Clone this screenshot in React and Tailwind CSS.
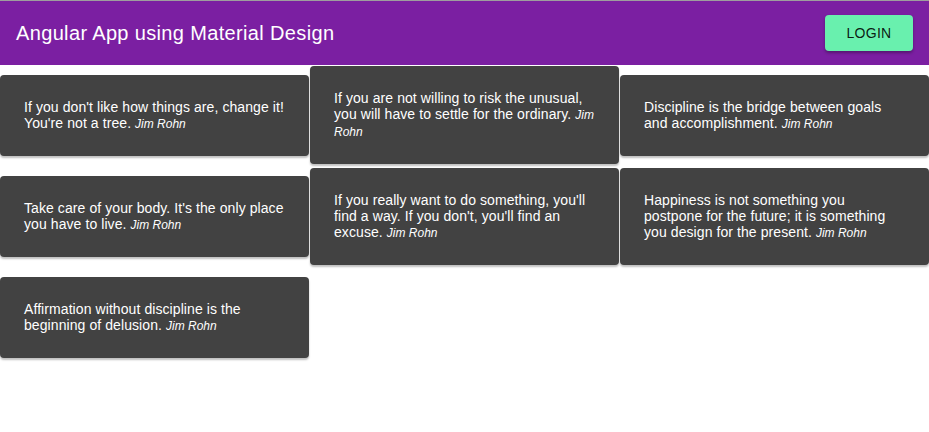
const quotes = [
  ["If you don't like how things are, change it! You're not a tree."],
  ["If you are not willing to risk the unusual, you will have to settle for the ordinary."],
  ["Discipline is the bridge between goals and accomplishment."],
  ["Take care of your body. It's the only place you have to live."],
  ["If you really want to do something, you'll find a way. If you don't, you'll find an excuse."],
  ["Happiness is not something you", "postpone for the future; it is something you design for the present."],
  ["Affirmation without discipline is the beginning of delusion."],
];

export default function App() {
  return (
    <div className="min-h-[432px] bg-white font-['Liberation_Sans',Arial,sans-serif]">
      <header className="flex h-[65px] items-center justify-between border-t border-[#9e9e9e] bg-[#7b1fa2] pl-4 pr-4">
        <h1 className="text-[20px] tracking-[0.35px] text-white">Angular App using Material Design</h1>
        <button className="h-9 w-[88px] rounded bg-[#69f0ae] text-[14px] font-medium tracking-[0.3px] text-black/90 shadow-[0_2px_3px_rgba(0,0,0,0.3)]">
          LOGIN
        </button>
      </header>
      <section className="grid grid-cols-3 gap-x-px gap-y-[5px] pt-[2px]">
        {quotes.map((q, i) => (
          <div key={i} className="flex h-24 items-center">
            <div className="w-full rounded bg-[#424242] p-6 text-[14px] leading-4 tracking-[0.08px] text-white shadow-[0_2px_2px_rgba(0,0,0,0.25)]">
              {q[0]}
              {q[1] && <br />}
              {q[1]} <em className="text-[12px] tracking-normal">Jim Rohn</em>
            </div>
          </div>
        ))}
      </section>
    </div>
  );
}
